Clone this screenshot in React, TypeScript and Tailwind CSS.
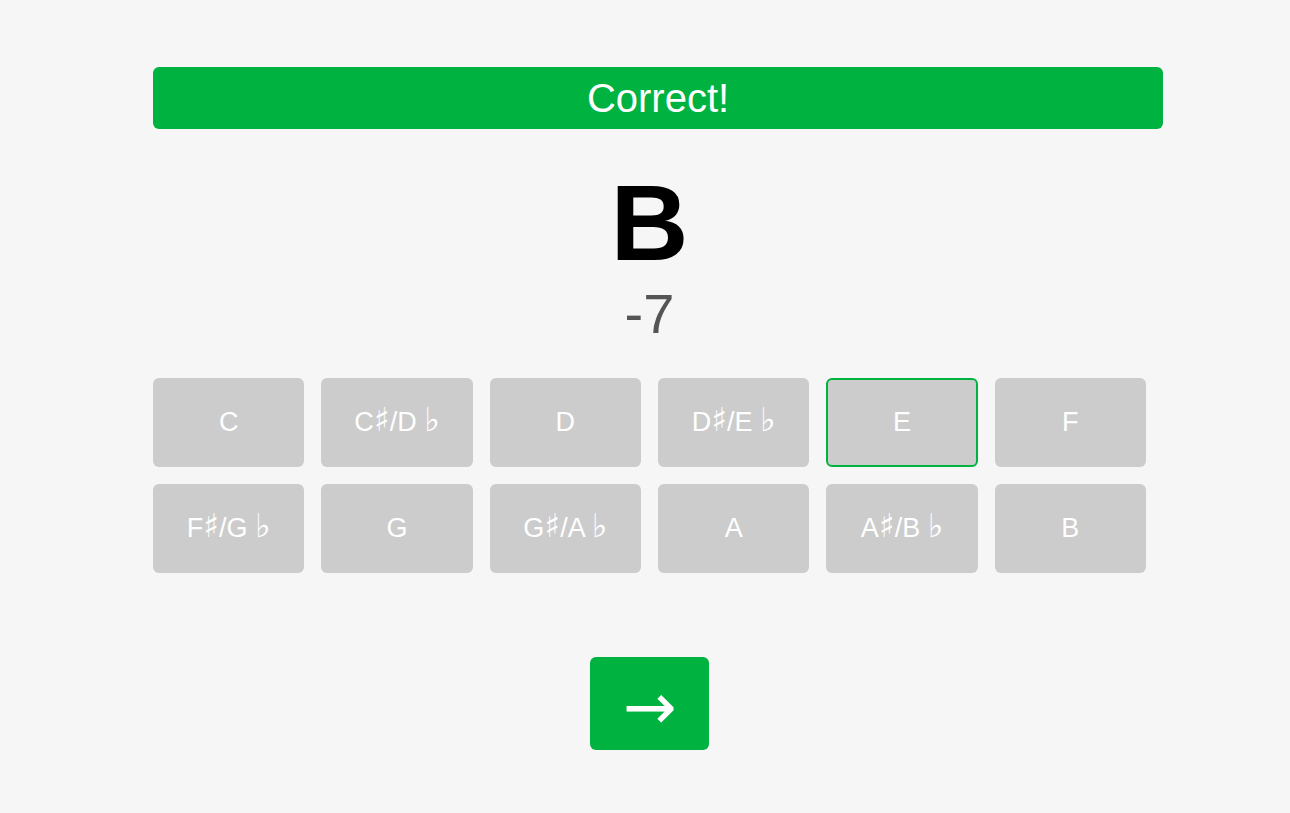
import React from "react";

const notes = [
  "C",
  "C♯/D ♭",
  "D",
  "D♯/E ♭",
  "E",
  "F",
  "F♯/G ♭",
  "G",
  "G♯/A ♭",
  "A",
  "A♯/B ♭",
  "B",
];

// accidentals come from DejaVu, the rest from Liberation Sans
function NoteLabel({ text }: { text: string }) {
  return (
    <span className="leading-none">
      {text.split(/([♯♭])/).map((part, i) =>
        part === "♯" || part === "♭" ? (
          <span
            key={i}
            style={{ fontFamily: '"DejaVu Sans", sans-serif' }}
            className="text-[33px] leading-[0]"
          >
            {part}
          </span>
        ) : (
          <span key={i}>{part}</span>
        )
      )}
    </span>
  );
}

export default function App() {
  const selected = "E";

  return (
    <div
      className="min-h-[813px] bg-[#f6f6f6] pt-[67px] pl-[153px]"
      style={{ fontFamily: '"Liberation Sans", Arial, sans-serif' }}
    >
      <div className="w-[1010px]">
        {/* Result banner */}
        <div className="flex h-[62px] items-center justify-center rounded-md bg-[#00b341] text-[40px] text-white">
          Correct!
        </div>

        <div className="flex w-[993px] flex-col items-center">
          {/* Note and offset */}
          <div className="mt-[40px] text-[108px] font-bold leading-none text-black">B</div>
          <div className="mt-[9px] text-[56px] leading-none text-[#555555]">-7</div>

          {/* Answer grid */}
          <div className="mt-[36px] grid w-full grid-cols-6 gap-[17px]">
            {notes.map((note) => (
              <button
                key={note}
                className={
                  "flex h-[89px] items-center justify-center whitespace-pre rounded-md border-2 bg-[#cccccc] text-[27px] text-white " +
                  (note === selected ? "border-[#00b341]" : "border-transparent")
                }
              >
                <NoteLabel text={note} />
              </button>
            ))}
          </div>

          {/* Next */}
          <button
            className="mt-[84px] flex h-[93px] w-[119px] items-center justify-center rounded-md bg-[#00b341] pt-[6px] text-[64px] leading-none text-white"
            style={{ fontFamily: '"DejaVu Sans", sans-serif' }}
          >
            →
          </button>
        </div>
      </div>
    </div>
  );
}
